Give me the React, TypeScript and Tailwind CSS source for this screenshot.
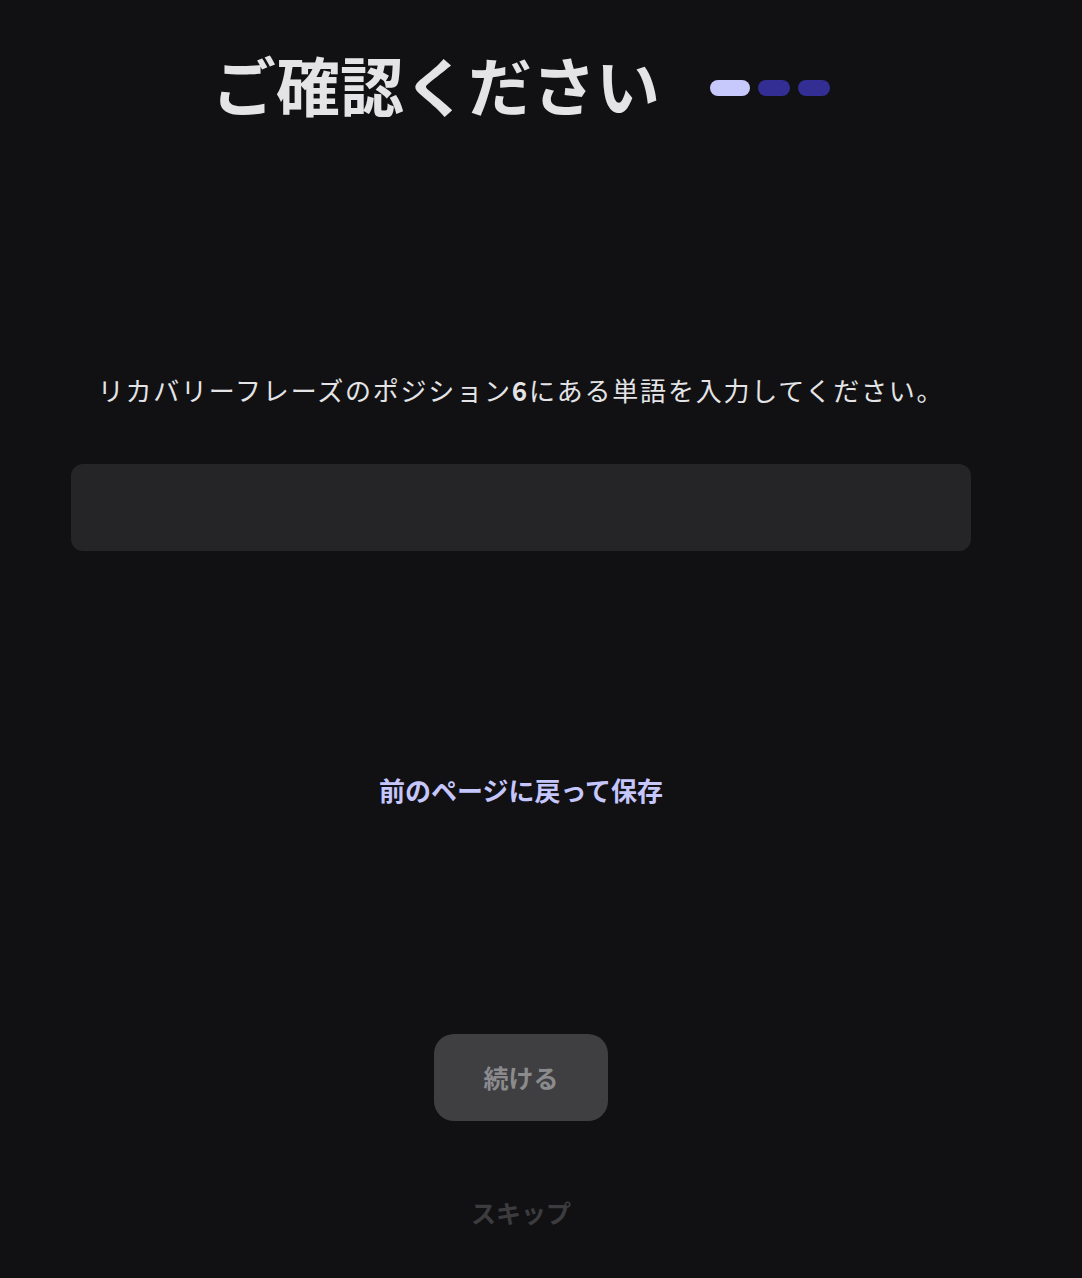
import React from "react";

export default function App() {
  return (
    <div
      className="min-h-[1278px] w-full bg-[#111113]"
      style={{ fontFamily: '"Noto Sans CJK JP", "Noto Sans", sans-serif' }}
    >
      <div className="flex w-[1042px] flex-col items-center">
        <div className="mt-[51px] flex items-center">
          <h1 className="text-[64px] font-bold leading-[64px] text-[#e4e4e7]">ご確認ください</h1>
          <div className="ml-[50px] mt-[10px] flex items-center gap-2">
            <span className="h-4 w-10 rounded-full bg-[#c7c8fb]" />
            <span className="h-4 w-8 rounded-full bg-[#332e94]" />
            <span className="h-4 w-8 rounded-full bg-[#332e94]" />
          </div>
        </div>
        <p className="mt-[259px] text-[26px] leading-8 tracking-[1.8px] text-[#e4e4e7]">
          リカバリーフレーズのポジション<span className="font-bold">6</span>にある単語を入力してください。
        </p>
        <input
          type="text"
          className="mt-[58px] h-[87px] w-[900px] rounded-xl bg-[#252528] px-6 text-[22px] text-[#e4e4e7] outline-none"
        />
        <button className="mt-[223px] text-[26px] font-bold leading-8 text-[#c5c6fb]">
          前のページに戻って保存
        </button>
        <button className="mt-[228px] flex h-[87px] w-[174px] items-center justify-center rounded-[20px] bg-[#3f3f42] text-[25px] font-bold text-[#8b8b8e]">
          続ける
        </button>
        <button className="mt-[75px] text-[25px] font-bold leading-8 text-[#3c3c3f]">スキップ</button>
      </div>
    </div>
  );
}
